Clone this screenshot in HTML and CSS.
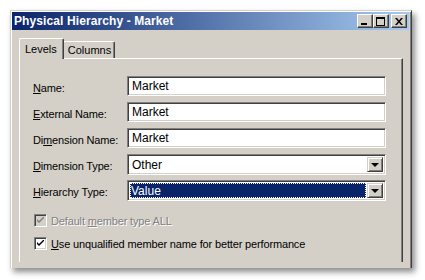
FILE: index.html
```html
<!DOCTYPE html>
<html lang="en">
<head>
    <meta charset="UTF-8">
    <title>Physical Hierarchy - Market</title>
    <link rel="stylesheet" href="styles.css">
</head>
<body>
    <div class="ventana">
        <div class="titulo">
            <span class="titulo-texto">Physical Hierarchy - Market</span>
            <div class="botones">
                <span class="btn-titulo"><span class="ico-min"></span></span>
                <span class="btn-titulo"><span class="ico-max"></span></span>
                <span class="btn-titulo cerrar">
                    <svg width="8" height="7" viewBox="0 0 8 7"><path d="M0 0h2l2 2.5L6 0h2L5 3.5 8 7H6L4 4.5 2 7H0l3-3.5z" fill="#000"/></svg>
                </span>
            </div>
        </div>
        <div class="contenido">
            <div class="pestanas">
                <div class="pestana activa">Levels</div>
                <div class="pestana">Columns</div>
            </div>
            <div class="panel">
                <div class="fila">
                    <label class="etiqueta"><u>N</u>ame:</label>
                    <div class="campo">Market</div>
                </div>
                <div class="fila">
                    <label class="etiqueta"><u>E</u>xternal Name:</label>
                    <div class="campo">Market</div>
                </div>
                <div class="fila">
                    <label class="etiqueta">Di<u>m</u>ension Name:</label>
                    <div class="campo">Market</div>
                </div>
                <div class="fila">
                    <label class="etiqueta"><u>D</u>imension Type:</label>
                    <div class="combo">
                        <span class="combo-valor">Other</span>
                        <span class="flecha"><span class="triangulo"></span></span>
                    </div>
                </div>
                <div class="fila">
                    <label class="etiqueta"><u>H</u>ierarchy Type:</label>
                    <div class="combo">
                        <span class="combo-valor seleccion">Value</span>
                        <span class="flecha"><span class="triangulo"></span></span>
                    </div>
                </div>
                <div class="opcion deshabilitada">
                    <span class="casilla">
                        <svg width="7" height="7" viewBox="0 0 7 7"><path d="M0 2l2 2 5-5v2L2 6 0 4z" fill="#808080"/></svg>
                    </span>
                    <span>Default <u>m</u>ember type ALL</span>
                </div>
                <div class="opcion">
                    <span class="casilla">
                        <svg width="7" height="7" viewBox="0 0 7 7"><path d="M0 2l2 2 5-5v2L2 6 0 4z" fill="#000"/></svg>
                    </span>
                    <span><u>U</u>se unqualified member name for better performance</span>
                </div>
            </div>
        </div>
    </div>
</body>
</html>
```

FILE: styles.css
```css
body {
    margin: 0;
    background: #fff;
    font-family: "Liberation Sans", Arial, sans-serif;
    font-size: 11px;
    color: #000;
    height: 280px;
    overflow: hidden;
}
.ventana {
    margin: 10px 0 0 10px;
    width: 397px;
    height: 256px;
    background: #d4d0c8;
    border: 1px solid;
    border-color: #d4d0c8 #404040 #404040 #d4d0c8;
    border-bottom: none;
    box-shadow: inset 1px 1px #fff, inset -1px 0 #808080, 3px 4px 6px rgba(0, 0, 0, 0.45);
    padding: 1px 2px 0 1px;
}
.titulo {
    height: 18px;
    background: linear-gradient(to right, #0a246a, #a6caf0);
    display: flex;
    align-items: center;
    justify-content: space-between;
    padding: 0 2px 0 2px;
}
.titulo-texto {
    color: #fff;
    font-weight: bold;
    font-size: 12px;
    letter-spacing: 0.1px;
}
.botones {
    display: flex;
}
.btn-titulo {
    width: 16px;
    height: 14px;
    box-sizing: border-box;
    background: #d4d0c8;
    border: 1px solid;
    border-color: #fff #404040 #404040 #fff;
    box-shadow: inset -1px -1px #808080;
    display: flex;
    align-items: center;
    justify-content: center;
}
.cerrar {
    margin-left: 2px;
}
.ico-min {
    width: 6px;
    height: 2px;
    background: #000;
    margin-top: 6px;
    margin-left: -2px;
}
.ico-max {
    width: 9px;
    height: 9px;
    box-sizing: border-box;
    border: 1px solid #000;
    border-top-width: 2px;
    margin-left: -1px;
}
.cerrar svg {
    margin-left: -1px;
}
.contenido {
    padding: 9px 6px 0 7px;
}
.pestanas {
    display: flex;
    align-items: flex-end;
    height: 19px;
}
.pestana {
    height: 16px;
    line-height: 16px;
    padding: 0 3px 0 4px;
    border: 1px solid;
    border-color: #fff #404040 transparent #fff;
    border-bottom: none;
    box-shadow: inset -1px 0 #808080;
    border-radius: 2px 2px 0 0;
}
.pestana.activa {
    height: 20px;
    line-height: 20px;
    padding: 0 6px 0 5px;
    position: relative;
    top: 1px;
    margin-right: -1px;
    background: #d4d0c8;
    z-index: 1;
}
.panel {
    height: 186px;
    border: 1px solid;
    border-color: #fff #404040 #404040 #fff;
    border-bottom: none;
    box-shadow: inset -1px 0 #808080;
    padding: 17px 13px 0 13px;
    letter-spacing: -0.15px;
}
.fila {
    display: flex;
    align-items: center;
    height: 20px;
    margin-bottom: 6px;
}
.etiqueta {
    width: 94px;
    flex: none;
    padding-top: 3px;
}
.campo {
    width: 259px;
    height: 20px;
    box-sizing: border-box;
    background: #fff;
    border: 1px solid;
    border-color: #808080 #fff #fff #808080;
    box-shadow: inset 1px 1px #404040, inset -1px -1px #d4d0c8;
    padding: 2px 4px 0 4px;
    line-height: 15px;
    font-size: 12px;
    letter-spacing: 0;
}
.combo {
    width: 259px;
    height: 21px;
    box-sizing: border-box;
    background: #fff;
    border: 1px solid;
    border-color: #808080 #fff #fff #808080;
    box-shadow: inset 1px 1px #404040, inset -1px -1px #d4d0c8;
    padding: 2px;
    display: flex;
    align-items: stretch;
    margin-top: 1px;
    letter-spacing: 0;
}
.combo-valor {
    flex: 1;
    padding: 1px 0 0 2px;
    line-height: 14px;
    font-size: 12px;
}
.combo-valor.seleccion {
    background: #0a246a;
    color: #fff;
    outline: 1px dotted #fff;
    outline-offset: -1px;
    margin-right: 1px;
    padding-left: 1px;
}
.flecha {
    width: 16px;
    box-sizing: border-box;
    background: #d4d0c8;
    border: 1px solid;
    border-color: #d4d0c8 #404040 #404040 #d4d0c8;
    box-shadow: inset 1px 1px #fff, inset -1px -1px #808080;
    display: flex;
    align-items: center;
    justify-content: center;
}
.triangulo {
    width: 0;
    height: 0;
    border-left: 4px solid transparent;
    border-right: 4px solid transparent;
    border-top: 4px solid #000;
    margin-top: 1px;
}
.opcion {
    display: flex;
    align-items: center;
    gap: 4px;
    height: 13px;
    margin-left: 1px;
    margin-bottom: 10px;
}
.deshabilitada {
    margin-top: 14px;
    color: #808080;
    text-shadow: 1px 1px #fff;
}
.casilla {
    width: 13px;
    height: 13px;
    box-sizing: border-box;
    background: #fff;
    border: 1px solid;
    border-color: #808080 #fff #fff #808080;
    box-shadow: inset 1px 1px #404040, inset -1px -1px #d4d0c8;
    display: flex;
    align-items: center;
    justify-content: center;
}
.deshabilitada .casilla {
    background: #d4d0c8;
}
```
